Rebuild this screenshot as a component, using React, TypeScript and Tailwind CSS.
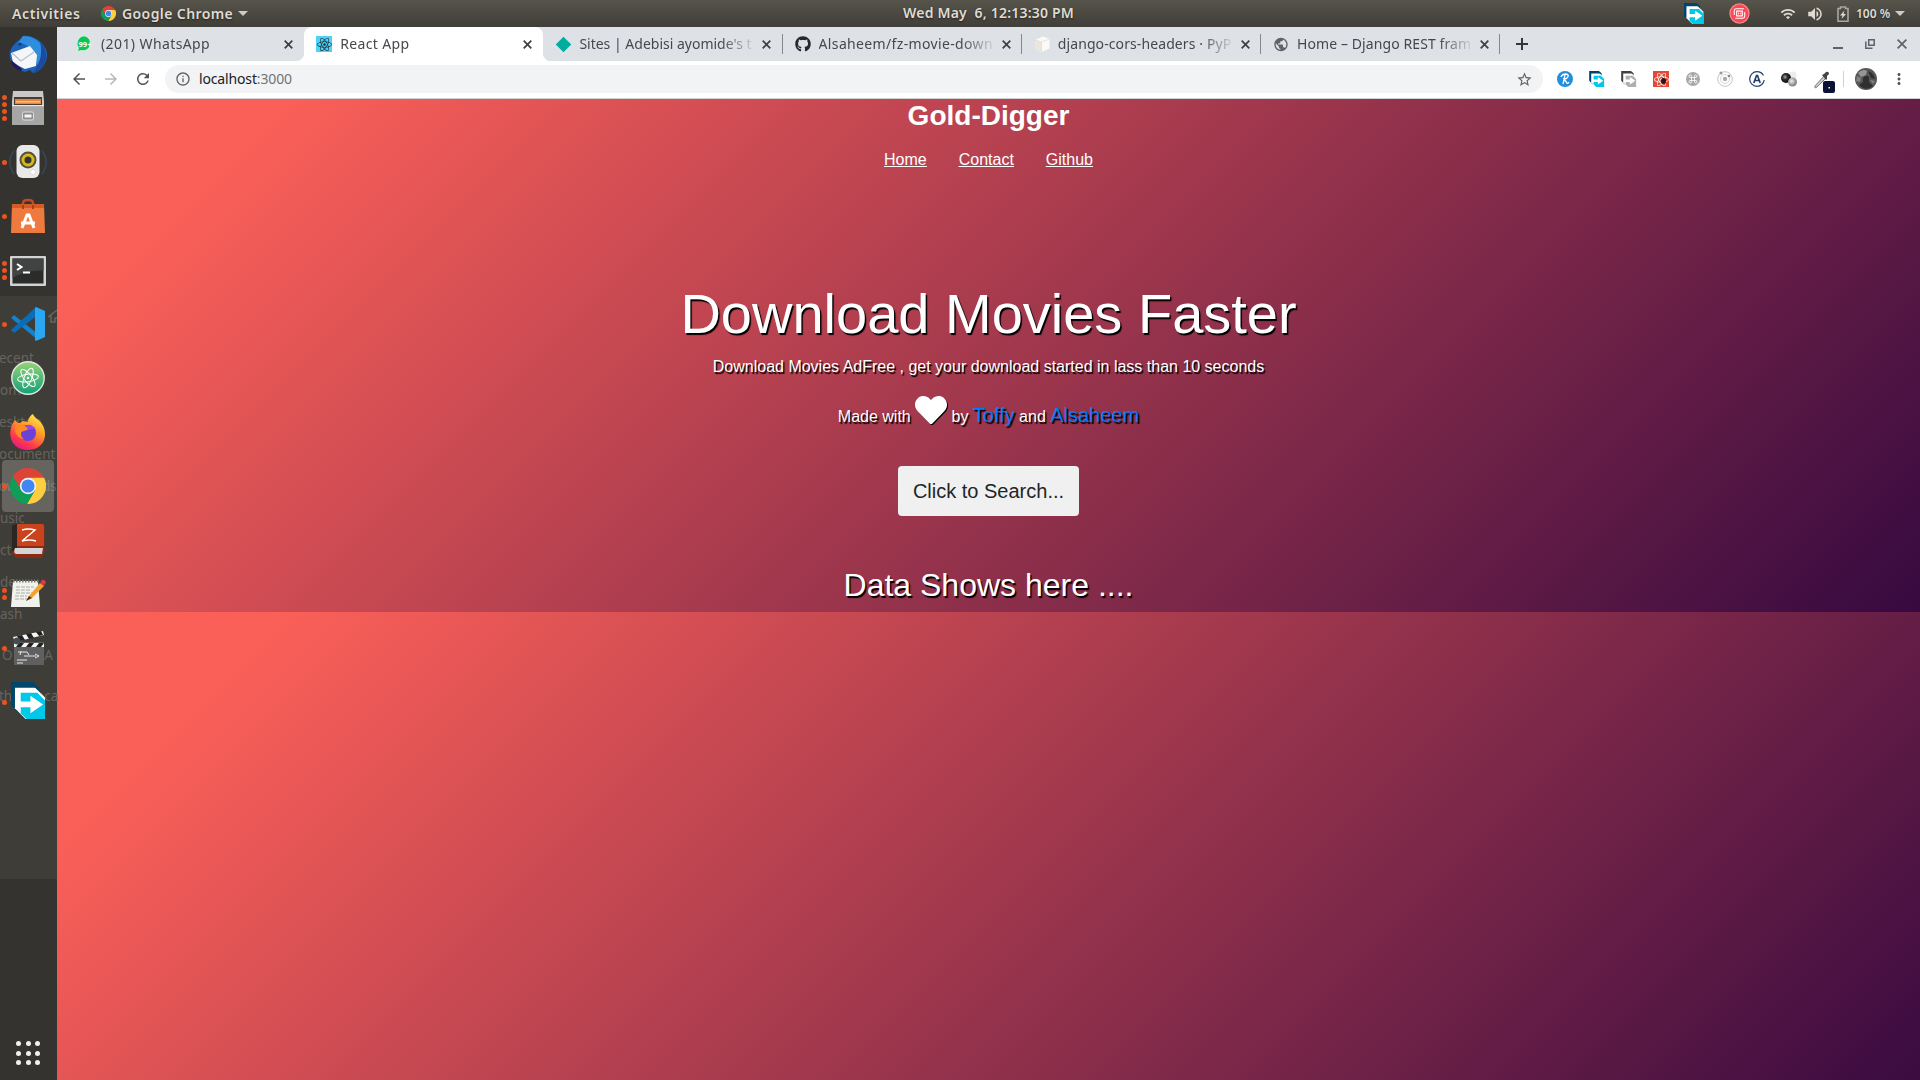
import React from "react";
import { FaGithub, FaHeart, FaReact } from "react-icons/fa";
import {
  MdArrowBack,
  MdArrowForward,
  MdInfoOutline,
  MdMoreVert,
  MdPublic,
  MdRefresh,
  MdStarBorder,
  MdVolumeUp,
  MdWifi,
} from "react-icons/md";

const UI = "font-['Noto_Sans','Open_Sans',sans-serif]";

/* ---------- shared logos ---------- */

function ChromeLogo({ className }: { className: string }) {
  return (
    <svg viewBox="2 2 44 44" className={className}>
      <path d="M15.34 29 5.54 12.03A22 22 0 0 1 43.6 14H24Z" fill="#db4437" />
      <path d="M24 14h19.6A22 22 0 0 1 22.86 45.97L32.66 29Z" fill="#ffcd40" />
      <path d="M32.66 29 22.86 45.97A22 22 0 0 1 5.54 12.03L15.34 29Z" fill="#0f9d58" />
      <circle cx="24" cy="24" r="10" fill="#f1f1f1" />
      <circle cx="24" cy="24" r="8" fill="#4285f4" />
    </svg>
  );
}

function FdmLogo({ className, dark = "#00456b", light = "#00c8e8" }: { className: string; dark?: string; light?: string }) {
  return (
    <svg viewBox="0 0 36 38" className={className}>
      <path d="M0 0h22l7 6v6H8v20L0 24Z" fill={dark} />
      <path d="M4 4h19l12 12v22H15L4 27Z" fill="#fff" />
      <path d="M10 11h17l8 8v19H16L10 32V26h10v6l13-9-13-9v6H10Z" fill={light} />
      <path d="M0 0h22l7 6H4v20L0 22Z" fill={dark} />
    </svg>
  );
}

/* ---------- top panel ---------- */

function TopPanel() {
  return (
    <header
      className={`relative flex h-[27px] items-center bg-linear-to-b from-[#57544b] to-[#403e38] text-[#dfdbd2] font-semibold text-[14px] [text-shadow:0_1px_2px_rgba(0,0,0,0.5)] ${UI}`}
    >
      <span className="ml-3 w-[89px] whitespace-nowrap tracking-[0.6px]">Activities</span>
      <ChromeLogo className="size-[15px]" />
      <span className="ml-[6px] w-[111px] whitespace-nowrap tracking-[0.4px]">Google Chrome</span>
      <span className="ml-[5px] border-x-[5px] border-t-[5px] border-x-transparent border-t-[#cfccc4]" />
      <span className="absolute top-[2px] left-[903px] whitespace-pre tracking-[0.2px]">Wed May&nbsp; 6, 12:13:30 PM</span>
      <div className="ml-auto mr-[15px] flex items-center">
        <FdmLogo className="mr-[25px] h-[21px] w-5" />
        <svg viewBox="0 0 22 22" className="mr-[30px] size-[21px]" fill="none">
          <circle cx="11" cy="11" r="10" fill="#ff4558" stroke="#f58a86" strokeWidth="1.3" />
          <path
            d="M5.500 12.500V8a2 2 0 0 1 2-2h8M16.500 9.500V14a2 2 0 0 1-2 2h-8M8 8.500h6v5H8Z"
            stroke="#fff"
            strokeWidth="1.1"
          />
          <path d="M10 10.300v1.600M12.300 10.300v1.600" stroke="#fff" strokeWidth="1.200" />
        </svg>
        <MdWifi className="mr-[10px] size-4" />
        <MdVolumeUp className="mr-[13px] size-[18px]" />
        <svg viewBox="0 0 12 16" className="mr-[7px] h-4 w-3" fill="none">
          <path d="M3.500 2.500V1h5v1.500H11v12.700H1V2.500Z" stroke="#aaa79f" strokeWidth="1.600" />
          <path d="M7.500 4.500 3 9.500h2.500l-1 3.500L9 8H6.500Z" fill="#dfdbd2" />
        </svg>
        <span className="w-[35px] whitespace-nowrap text-[12px]">100 %</span>
        <span className="ml-[4px] border-x-[5px] border-t-[5px] border-x-transparent border-t-[#cfccc4]" />
      </div>
    </header>
  );
}

/* ---------- dock ---------- */

const dockIcons: Record<string, React.ReactNode> = {
  thunderbird: (
    <svg viewBox="0 0 38 38" className="size-[38px]">
      <path d="M14 1C22-1 36 6 38 18c1 10-7 19-14 20l-3-3-5 2C6 34-1 26 1 17 3 9 9 7 14 1Z" fill="#1d62b6" />
      <path d="M14 1c7 0 15 3 19 10 2 6-1 14-5 19C27 18 20 8 9 8Z" fill="#2f8ddd" />
      <path d="M31 7c6 6 8 15 4 22-3 5-7 8-11 9 7-9 10-20 7-31Z" fill="#1b4aa0" />
      <path d="M2 18 21 11l7 9-1 11-11 3L4 28Z" fill="#f5f6f8" />
      <path d="m3 18 9 8 13-9" fill="none" stroke="#b9bec8" strokeWidth="1.200" />
      <path d="m2 25 11 9-1 2C6 34 2 30 2 25Z" fill="#221860" />
      <circle cx="11" cy="9" r="1.500" fill="#123a78" />
    </svg>
  ),
  files: (
    <svg viewBox="0 0 34 36" className="h-9 w-[34px]">
      <path d="M2 1h30l1 10v23H1V11Z" fill="#c9c9c9" />
      <path d="M3 7h28v8H3Z" fill="#4a3c30" />
      <path d="M4 9h26v5H4Z" fill="#f0833a" />
      <path d="M5 11h24v1.500H5Z" fill="#f8c08c" />
      <path d="M1 15h32v20H1Z" fill="#a6a6a6" />
      <path d="M1 15h32v1.200H1Z" fill="#e5e5e5" />
      <rect x="11.500" y="22" width="11" height="8" rx="1.500" fill="#8d8d8d" stroke="#e0e0e0" />
      <path d="M13.500 24.500h7v3h-7Z" fill="#f4f4f4" />
    </svg>
  ),
  rhythmbox: (
    <svg viewBox="0 0 38 36" className="h-9 w-[38px]">
      <path d="M5 7C-1 14 0 23 5 30M33 7c6 7 5 16 0 23" fill="none" stroke="#36495a" strokeWidth="1.500" />
      <rect x="7.500" y="1" width="23" height="33" rx="6" fill="#e9e9e9" />
      <circle cx="19" cy="16" r="8.500" fill="#55513c" />
      <circle cx="19" cy="16" r="6.500" fill="#d8b91a" />
      <circle cx="19" cy="16" r="3.500" fill="#37342b" />
      <circle cx="24" cy="28" r="2.500" fill="#fff" stroke="#ccc" strokeWidth=".6" />
    </svg>
  ),
  software: (
    <svg viewBox="0 0 34 36" className="h-9 w-[34px]">
      <path d="M12 11V5q0-3 5-3t5 3v6" fill="none" stroke="#c04a1c" strokeWidth="2.500" />
      <path d="M1 6h32l1 29H0Z" fill="#ee7a40" />
      <path d="M1 6h32v4H1Z" fill="#d55b26" />
      <path d="M12 11V7M22 11V7" stroke="#a83f16" strokeWidth="2" />
      <path d="m11 30 5-13h2l5 13M10 25h14" fill="none" stroke="#fff" strokeWidth="3" />
    </svg>
  ),
  terminal: (
    <svg viewBox="0 0 36 30" className="mt-[2px] h-[30px] w-9">
      <rect x="0" y="0" width="36" height="30" rx="1" fill="#d2d2d2" />
      <rect x="2.500" y="2.500" width="31" height="25" fill="#2a2b2b" />
      <path d="M2.500 2.500h31v12Q15 14 2.500 22Z" fill="#414242" />
      <path d="m7 8 4.500 3L7 14M13 16.500h7" fill="none" stroke="#fff" strokeWidth="2" />
    </svg>
  ),
  vscode: (
    <svg viewBox="0 0 34 34" className="size-[34px]">
      <path d="M0 11 3 8 27 27v6Z" fill="#1482cc" />
      <path d="M0 23 25 0l2 8L3 26Z" fill="#0a6db5" />
      <path d="m25 0 9 4v26l-9 4-1-1V1Z" fill="#2ba6f3" />
    </svg>
  ),
  atom: (
    <svg viewBox="0 0 34 34" className="size-[34px]">
      <defs>
        <linearGradient id="atomFill" x1="0" y1="0" x2="0" y2="1">
          <stop offset="0" stopColor="#97d277" />
          <stop offset="1" stopColor="#11a277" />
        </linearGradient>
      </defs>
      <circle cx="17" cy="17" r="16.200" fill="url(#atomFill)" stroke="#e3e6e1" strokeWidth="1.400" />
      <g fill="none" stroke="#fff" strokeWidth="1">
        <ellipse cx="17" cy="17" rx="10.500" ry="3.800" transform="rotate(-8 17 17)" />
        <ellipse cx="17" cy="17" rx="10.500" ry="3.800" transform="rotate(52 17 17)" />
        <ellipse cx="17" cy="17" rx="10.500" ry="3.800" transform="rotate(112 17 17)" />
      </g>
      <circle cx="17" cy="17" r="1.300" fill="#fff" />
    </svg>
  ),
  firefox: (
    <svg viewBox="0 0 36 36" className="size-9">
      <defs>
        <linearGradient id="foxFill" x1="0.800" y1="0" x2="0.250" y2="1">
          <stop offset="0" stopColor="#fff04a" />
          <stop offset="0.400" stopColor="#ff9a28" />
          <stop offset="0.750" stopColor="#ff3a4c" />
          <stop offset="1" stopColor="#e31587" />
        </linearGradient>
      </defs>
      <path d="M5 6c1 2 3 3 5 3l3-2 5 1c0-4 3-7 5-8 1 4 6 5 9 10 6 9 4 25-14 26C4 36-2 25 1 14c1-3 2-6 4-8Z" fill="url(#foxFill)" />
      <circle cx="18" cy="19" r="8" fill="#6a42d8" />
      <path d="M13 13c4-4 11-2 13 3-4-2-5 0-8 0s-3-2-5-3Z" fill="#a045e0" />
      <path d="M5 12c4-3 9-2 13 3-3 3-7 1-7 5 0 2 1 4 3 5C7 24 4 18 5 12Z" fill="#ff8a26" />
    </svg>
  ),
  chrome: <ChromeLogo className="size-9" />,
  dictionary: (
    <svg viewBox="0 0 34 34" className="mt-[1px] size-[34px]">
      <path d="M4 0h28l1.500 2v26l-3 6H5l-4-5V3Z" fill="#8c2a14" />
      <path d="M1 2q1-2 5-2v24l-5 4Z" fill="#2b2523" />
      <path d="M6 0h26l1 2v20H6Z" fill="#c9431c" />
      <path d="M4 24h28l-1 6H5q-3-1-1-6Z" fill="#d5d5d8" />
      <path d="M11 6q6-2 13 0L11 17q7-2 14 0" fill="none" stroke="#fff" strokeWidth="1.400" />
    </svg>
  ),
  notes: (
    <svg viewBox="0 0 36 30" className="mb-[3px] ml-[2px] h-[30px] w-9">
      <path d="M2 3h25l2 26H0Z" fill="#f2f2ec" />
      <path d="M2 3h26" stroke="#75756f" strokeWidth="3" strokeDasharray="1.500 1.500" />
      <path d="M5 9h18M5 12h14M5 15h17M4 18h12M4 21h13" stroke="#aaa" strokeDasharray="4 1" />
      <path d="m18 18 11-13 4 3-12 12-6 3Z" fill="#f5a12d" />
      <path d="m15 23 3-5 3 2Z" fill="#45392b" />
      <path d="m29 5 2-3q2-1 4 2l-2 4Z" fill="#d73b44" />
    </svg>
  ),
  video: (
    <svg viewBox="0 0 32 36" className="ml-px h-9 w-8">
      <path d="m0 7 30-6 1 4L2 12Z" fill="#f5f5f5" />
      <path d="m4 6 5-1 3 5-5 1ZM13 4l5-1 3 5-5 1ZM23 2l5-1 2 4-4 1Z" fill="#222" />
      <path d="M1 12h30v23H1Z" fill="#606060" />
      <path d="M1 13h30v4H1Z" fill="#f5f5f5" />
      <path d="M6 13h5l-3 4H3ZM16 13h5l-3 4h-5ZM26 13h5l-3 4h-5Z" fill="#222" />
      <circle cx="4" cy="11" r="3.500" fill="#444e50" />
      <path d="M5 22h9M8 21l-1 4M11 26h12M14 22l2 3M22 24l4 2-4 2M4 30h10M4 33h6" fill="none" stroke="#e5e5e5" />
    </svg>
  ),
  fdm: <FdmLogo className="mb-[3px] h-[37px] w-[35px]" />,
};

const dock: [string, number][] = [
  ["thunderbird", 0],
  ["files", 4],
  ["rhythmbox", 1],
  ["software", 1],
  ["terminal", 3],
  ["vscode", 1],
  ["atom", 0],
  ["firefox", 0],
  ["chrome", 1],
  ["dictionary", 0],
  ["notes", 2],
  ["video", 1],
  ["fdm", 1],
];

/* Labels of the file manager window that show through the dock. */
const ghostLabels = [
  { text: "ecent", place: "top-[346px] left-[-1px]" },
  { text: "om", place: "top-[378px] left-0" },
  { text: "esktop", place: "top-[410px] left-[-1px]" },
  { text: "ocument", place: "top-[442px] left-[-1px]" },
  { text: "ownloads", place: "top-[474px] left-[-1px] tracking-[-0.500px]" },
  { text: "usic", place: "top-[506px] left-0" },
  { text: "ct", place: "top-[538px] left-0" },
  { text: "de", place: "top-[570px] left-0" },
  { text: "ash", place: "top-[602px] left-0" },
  { text: "OMPA", place: "top-[643px] left-[2px] tracking-[4px]" },
  { text: "ther Loca", place: "top-[684px] left-[-1px]" },
];

function Dock() {
  return (
    <aside className="flex w-[57px] shrink-0 flex-col bg-[linear-gradient(to_bottom,#35332f_269px,#3f3d38_269px,#3f3d38_852px,#35332f_852px)]">
      {ghostLabels.map((g) => (
        <span key={g.text} className={`absolute whitespace-nowrap text-[13.500px] leading-6 text-[#66645f] ${g.place} ${UI}`}>
          {g.text}
        </span>
      ))}
      <svg viewBox="0 0 9 14" className="absolute top-[309px] left-[48px] h-[14px] w-[9px]" fill="none" stroke="#66645f" strokeWidth="1.500">
        <path d="M9 1 1 7.500h2V13h4V9h2" />
      </svg>
      {dock.map(([name, dots]) => (
        <div
          key={name}
          className={`relative mx-[2px] mb-[2px] flex h-[52px] w-[52px] items-center justify-center rounded-[4px] ${
            name === "chrome" ? "bg-[#b7b5b0]/33" : ""
          } ${name === "thunderbird" ? "mt-[1px]" : ""}`}
        >
          <div className="absolute top-0 left-[-1px] flex h-full w-[6px] flex-col items-center justify-center gap-[2px]">
            {Array.from({ length: dots }, (_, i) => (
              <span key={i} className="size-[5px] rounded-full bg-[#e95420]" />
            ))}
          </div>
          <div className="relative">{dockIcons[name]}</div>
        </div>
      ))}
      <div className="mt-auto mb-[15px] ml-4 grid w-6 grid-cols-3 gap-[4.500px]">
        {Array.from({ length: 9 }, (_, i) => (
          <span key={i} className="size-[5px] rounded-full bg-[#f2f1ef]" />
        ))}
      </div>
    </aside>
  );
}

/* ---------- browser chrome ---------- */

const tabs = [
  {
    title: "(201) WhatsApp",
    tracking: "tracking-[0.400px]",
    icon: (
      <svg viewBox="0 0 16 16" className="size-4">
        <path d="M8 0a7.500 7.500 0 1 1-4 14.500L.500 15.500 1.500 12A7.600 7.600 0 0 1 8 0Z" fill="#07c654" stroke="#fff" strokeWidth=".6" />
        <text x="8" y="10.700" textAnchor="middle" fontSize="7.500" fontWeight="700" fontFamily="Noto Sans, sans-serif" fill="#fff">
          99+
        </text>
      </svg>
    ),
  },
  {
    title: "React App",
    tracking: "tracking-[0.350px]",
    icon: (
      <span className="flex size-4 items-center justify-center bg-[#4fd2f7]">
        <FaReact className="size-[15px] text-[#20303a]" />
      </span>
    ),
  },
  {
    title: "Sites | Adebisi ayomide's t",
    tracking: "tracking-[0px]",
    icon: <span className="mx-[2.500px] block size-[11px] rotate-45 bg-[#00ad9f]" />,
  },
  { title: "Alsaheem/fz-movie-down", tracking: "tracking-[0.350px]", icon: <FaGithub className="size-4 text-[#24292e]" /> },
  {
    title: "django-cors-headers · PyP",
    tracking: "tracking-[0.100px]",
    icon: (
      <svg viewBox="0 0 16 16" className="size-4">
        <path d="m1 4 8-3.500L15.500 3v9.500L7.500 16 1 13Z" fill="#fbfaf7" />
        <path d="M1 4v9l6.500 3V6Z" fill="#ebe7df" />
        <path d="m1 4 6.500 2L15 3.200M7.500 6v9.500" fill="none" stroke="#d9d5ce" strokeWidth=".6" />
      </svg>
    ),
  },
  { title: "Home – Django REST fram", tracking: "tracking-[0.100px]", icon: <MdPublic className="size-[17px] text-[#5f6368]" /> },
];

function TabStrip() {
  return (
    <div className="flex h-[34px] bg-[#dee1e6]">
      <div className="w-[8px] shrink-0" />
      {tabs.map((t, i) => {
        const active = i === 1;
        return (
          <div
            key={t.title}
            className={`relative flex h-[34px] w-[239.200px] shrink-0 items-center pl-[12px] ${active ? "rounded-t-lg bg-white" : ""}`}
          >
            {active && (
              <>
                <span className="absolute bottom-0 -left-2 size-2 bg-[radial-gradient(circle_at_0_0,#dee1e6_8px,#fff_8.500px)]" />
                <span className="absolute -right-2 bottom-0 size-2 bg-[radial-gradient(circle_at_100%_0,#dee1e6_8px,#fff_8.500px)]" />
              </>
            )}
            <span className="flex w-4 shrink-0 justify-center">{t.icon}</span>
            <span
              className={`ml-2 w-[178px] whitespace-nowrap text-[14px] leading-5 text-[#45494d] [mask-image:linear-gradient(to_right,black_142px,transparent_178px)] ${t.tracking} ${UI}`}
            >
              {t.title}
            </span>
            <svg viewBox="0 0 9 9" className="ml-[5px] size-[9px] shrink-0" stroke="#3c4043" strokeWidth="1.700">
              <path d="m.7.7 7.600 7.600M8.300.7.7 8.300" />
            </svg>
            {i > 1 && <span className="absolute top-[7px] right-0 h-[20px] w-px bg-[#84878c]" />}
          </div>
        );
      })}
      <svg viewBox="0 0 14 14" className="mt-[10px] ml-[15px] size-[14px]">
        <path d="M7 1v12M1 7h12" stroke="#33373a" strokeWidth="2" />
      </svg>
      <div className="mr-[13px] ml-auto flex items-center gap-[22px]">
        <span className="mt-2 h-[2px] w-[10px] bg-[#5f6368]" />
        <svg viewBox="0 0 10 10" className="size-[10px]" fill="none" stroke="#5f6368" strokeWidth="1.500">
          <path d="M3.700.8h5.500v5.500H3.700ZM.8 2.500v6.700h6.700" />
        </svg>
        <svg viewBox="0 0 10 10" className="size-[10px]" stroke="#5f6368" strokeWidth="1.700">
          <path d="m.6.6 8.800 8.800M9.400.6.6 9.400" />
        </svg>
      </div>
    </div>
  );
}

function Extensions() {
  return (
    <div className="flex items-center gap-4">
      <svg viewBox="0 0 16 16" className="size-4">
        <circle cx="8" cy="8" r="8" fill="#1f8fe0" />
        <path d="M4 6q1-3 5-3 4 1 1 4-1 1-3 1l3 4q1 1 2-1M8 4l-2 9" fill="none" stroke="#fff" strokeWidth="1.300" />
      </svg>
      <FdmLogo className="h-4 w-4" />
      <FdmLogo className="h-4 w-4" dark="#424242" light="#b0b0b0" />
      <span className="relative flex size-4 items-center justify-center bg-[#e24a38]">
        <FaReact className="size-[15px] text-white" />
        <span className="absolute right-[3px] bottom-[3px] h-[6px] w-[5px] rounded-full bg-[#2b1714]" />
      </span>
      <svg viewBox="0 0 16 16" className="size-4" fill="none">
        <circle cx="8" cy="8" r="7" fill="#a8a8a8" />
        <path
          d="M6.500 6.500h3v3h-3ZM6.500 6.500H5A1.300 1.300 0 1 1 6.500 5ZM9.500 6.500V5A1.300 1.300 0 1 1 11 6.500ZM9.500 9.500H11A1.300 1.300 0 1 1 9.500 11ZM6.500 9.500V11A1.300 1.300 0 1 1 5 9.500Z"
          stroke="#fff"
          strokeWidth=".8"
        />
      </svg>
      <svg viewBox="0 0 16 16" className="size-4" fill="none" stroke="#c4c4c4">
        <circle cx="8" cy="8" r="7.300" />
        <circle cx="8" cy="8" r="4.500" strokeWidth=".7" />
        <circle cx="8" cy="8" r="2.200" fill="#aaa" stroke="none" />
        <circle cx="4" cy="2" r="1.500" fill="#999" stroke="none" />
        <circle cx="12" cy="5" r="1.300" fill="#888" stroke="none" />
      </svg>
      <svg viewBox="0 0 16 16" className="size-4" fill="none" stroke="#22406b">
        <circle cx="8" cy="8" r="7.300" strokeWidth="1.200" strokeDasharray="41 5" strokeDashoffset="-1" />
        <path d="m4.800 12 2.700-7.500h1L11.200 12M6 9.500h4" strokeWidth="1.700" />
      </svg>
      <svg viewBox="0 0 16 16" className="size-4">
        <defs>
          <radialGradient id="ballDark" cx=".4" cy=".4">
            <stop offset="0" stopColor="#aaa" />
            <stop offset=".5" stopColor="#333" />
            <stop offset="1" stopColor="#111" />
          </radialGradient>
          <radialGradient id="ballLight" cx=".4" cy=".4">
            <stop offset="0" stopColor="#eee" />
            <stop offset="1" stopColor="#888" />
          </radialGradient>
        </defs>
        <circle cx="11.500" cy="4.500" r="4" fill="#ececec" />
        <circle cx="5" cy="7" r="5" fill="url(#ballDark)" />
        <circle cx="11.500" cy="11" r="4.500" fill="url(#ballLight)" />
      </svg>
      <svg viewBox="0 0 22 22" className="-mr-[5px] mt-[5px] size-[22px]">
        <path d="m2 15 9-10 2 2-9 9q-3 2-2-1Z" fill="#ccc" stroke="#666" strokeWidth=".8" />
        <path d="m9 4 2-1 2-2q3-1 3 2l-2 2v3l-1 1Z" fill="#444" />
        <rect x="10" y="10" width="12" height="12" rx="2" fill="#0c1236" />
        <rect x="15.500" y="16" width="1.500" height="1.500" fill="#fff" />
      </svg>
    </div>
  );
}

function Toolbar() {
  return (
    <div className="flex h-[38px] items-center border-b border-[#cfd1d5] bg-white pb-px pl-[13px]">
      <MdArrowBack className="size-[18px] text-[#50545a]" />
      <MdArrowForward className="ml-[14px] size-[18px] text-[#b6b8bb]" />
      <MdRefresh className="ml-[14px] size-[18px] text-[#50545a]" />
      <div className={`ml-[13px] flex h-7 w-[1378px] items-center rounded-full bg-[#f1f3f4] pl-[10px] text-[14px] text-[#202124] ${UI}`}>
        <MdInfoOutline className="size-4 text-[#5f6368]" />
        <span className="mb-px ml-2 tracking-[-0.150px]">
          localhost<span className="text-[#70757a]">:3000</span>
        </span>
        <MdStarBorder className="mr-[10px] ml-auto size-[17px] text-[#5f6368]" />
      </div>
      <div className="ml-[14px]">
        <Extensions />
      </div>
      <span className="ml-[13px] h-4 w-px bg-[#cfd1d4]" />
      <svg viewBox="0 0 22 22" className="ml-[11px] size-[22px]">
        <circle cx="11" cy="11" r="11" fill="#575757" />
        <path d="M3 5q5-5 9-2l-1 4-5 2Z" fill="#969696" />
        <path d="M13 3q6 2 7 8l-4-1Z" fill="#303030" />
        <path d="M8 10q3-4 6-1v5l4 4q-7 6-14-1l4-3Z" fill="#2f2f2f" />
        <path d="m2 8 4 2-1 4-4-1ZM15 12l5 1-2 3Z" fill="#828282" />
      </svg>
      <MdMoreVert className="ml-[13px] size-[18px] text-[#50545a]" />
    </div>
  );
}

/* ---------- web page ---------- */

function GoldDigger() {
  return (
    <main className="h-[981px] bg-[linear-gradient(135deg,#fa5f58_10%,#360940_100%)] bg-[length:100%_513px] text-center font-['Liberation_Sans',Arial,sans-serif] text-white">
      <h1 className="pt-[2px] text-[28px] leading-[30px] font-bold">Gold-Digger</h1>
      <nav className="mt-[17px] flex justify-center gap-8 text-base leading-6 underline">
        <a>Home</a>
        <a>Contact</a>
        <a>Github</a>
      </nav>
      <section className="[text-shadow:1.500px_1.500px_1px_#000]">
        <h2 className="mt-[108px] text-[56px] leading-[67px] font-light">Download Movies Faster</h2>
        <p className="mt-2 text-base leading-6">Download Movies AdFree , get your download started in lass than 10 seconds</p>
        <p className="mt-4 flex items-baseline justify-center gap-[4.400px] text-base leading-10">
          Made with
          <FaHeart className="-mt-px size-8 self-start drop-shadow-[1.500px_1.500px_0.500px_#000]" />
          by
          <a className="text-[20px] text-[#007bff]">Toffy</a>
          and
          <a className="text-[20px] text-[#007bff]">Alsaheem</a>
        </p>
      </section>
      <button className="mt-[29px] h-[50px] w-[181px] rounded-[4px] bg-[#f0f0f0] text-[20px] leading-[30px] text-[#212529]">
        Click to Search...
      </button>
      <h3 className="mt-[50px] text-[32px] leading-[38px] [text-shadow:1.500px_1.500px_1px_#000]">Data Shows here ....</h3>
    </main>
  );
}

export default function App() {
  return (
    <div className="relative flex h-[1080px] w-[1920px] flex-col overflow-hidden bg-[#35332f]">
      <TopPanel />
      <div className="flex h-[1053px]">
        <Dock />
        <div className="w-[1863px]">
          <TabStrip />
          <Toolbar />
          <GoldDigger />
        </div>
      </div>
    </div>
  );
}
